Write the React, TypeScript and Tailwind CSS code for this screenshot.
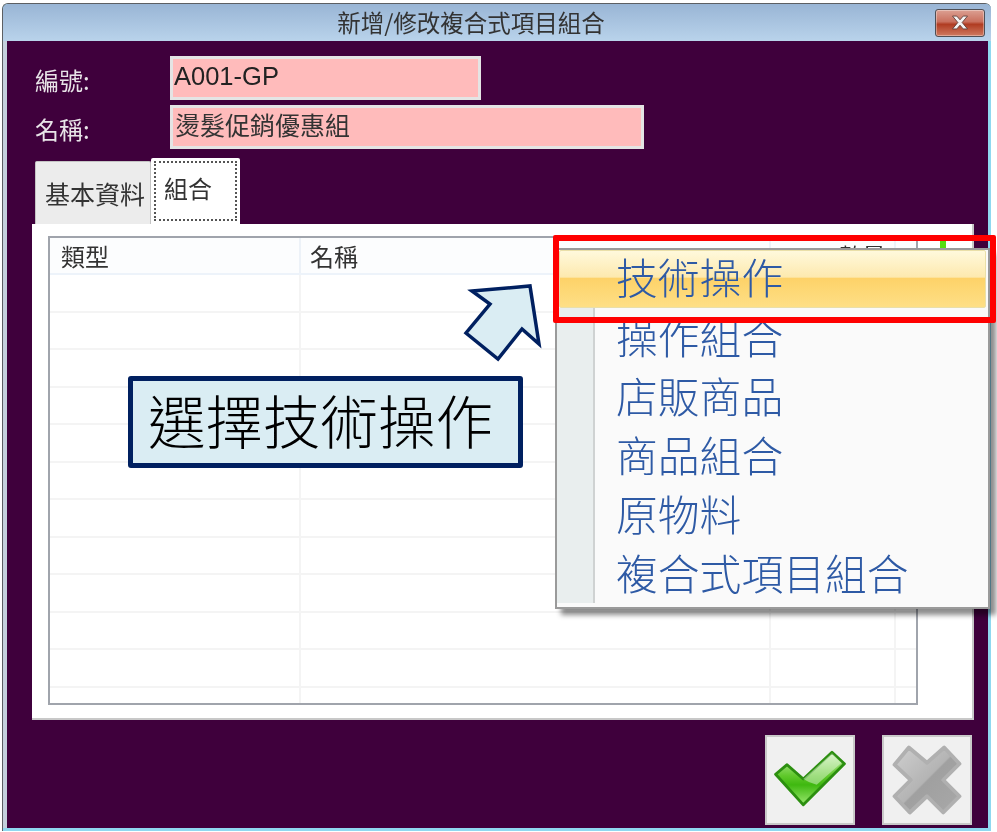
import React from "react";

const CJK = "font-['Noto_Sans_CJK_TC','Liberation_Sans',sans-serif]";
const MENU_ITEMS = ["操作組合", "店販商品", "商品組合", "原物料", "複合式項目組合"];

function CloseButton() {
  return (
    <div className="flex h-[28px] w-[50px] items-center justify-center rounded-[3px] border border-[#4f4f55] bg-[linear-gradient(#dca093,#c9705e_45%,#b03c22_55%,#cf7a60)] shadow-[inset_0_0_0_1px_rgba(255,255,255,0.35)]">
      <svg width="20" height="15" viewBox="0 0 18 14">
        <path d="M2 1h4l3 3.500L12 1h4l-5 6 5 6h-4l-3-3.500L6 13H2l5-6z" fill="#f4f4f4" stroke="#5b3a35" strokeWidth="0.8" />
      </svg>
    </div>
  );
}

function CheckIcon() {
  return (
    <svg width="88" height="88" viewBox="0 0 90 90">
      <defs>
        <linearGradient id="checkFill" x1="0" y1="0" x2="0" y2="1">
          <stop offset="0" stopColor="#c8f0b0" />
          <stop offset="0.45" stopColor="#5fc82a" />
          <stop offset="0.62" stopColor="#3fb810" />
          <stop offset="1" stopColor="#9be870" />
        </linearGradient>
      </defs>
      <path d="M9 39L21 29L38 44L68 16L81 28L38 71Z" fill="url(#checkFill)" stroke="#2c8f10" strokeWidth="3" strokeLinejoin="round" />
      <path d="M38 44L68 17L78 27L52 50Q44 48 38 44Z" fill="#ffffff" opacity="0.4" />
    </svg>
  );
}

function CrossIcon() {
  return (
    <svg width="88" height="88" viewBox="0 0 90 90">
      <defs>
        <linearGradient id="crossFill" x1="0" y1="0" x2="1" y2="1">
          <stop offset="0" stopColor="#cfcfcf" />
          <stop offset="0.49" stopColor="#b4b4b4" />
          <stop offset="0.51" stopColor="#a0a0a0" />
          <stop offset="1" stopColor="#a8a8a8" />
        </linearGradient>
      </defs>
      <path d="M11 29L26 11L45 27L63 11L79 28L62 45L79 62L62 79L45 62L27 79L11 62L28 45Z" fill="url(#crossFill)" stroke="#b0b0b0" strokeWidth="4" strokeLinejoin="round" />
    </svg>
  );
}

function Grid() {
  const rows = Array.from({ length: 12 });
  return (
    <div className="h-[469px] w-[870px] overflow-hidden border-2 border-[#a0a4ac] bg-white">
      <div className="flex h-[37px] border-b-2 border-[#edf3fa] bg-[#fcfdfe] text-[24px] leading-[36px] text-[#333]">
        <div className="w-[251px] border-r-2 border-[#edf2f8] pl-[11px]">類型</div>
        <div className="w-[470px] border-r-2 border-[#edf2f8] pl-[9px]">名稱</div>
        <div className="w-[125px] border-r-2 border-[#edf2f8] pr-[8px] text-right">數量</div>
      </div>
      {rows.map((_, i) => (
        <div key={i} className="flex h-[37.5px] border-b-2 border-[#f4f4f4]">
          <div className="w-[251px] border-r-2 border-[#f4f4f4]" />
          <div className="w-[470px] border-r-2 border-[#f4f4f4]" />
          <div className="w-[125px] border-r-2 border-[#f4f4f4]" />
        </div>
      ))}
    </div>
  );
}

function ContextMenu() {
  return (
    <div className="absolute left-[555px] top-[248px] w-[435px] border-2 border-[#9a9a9a] bg-[#fafafa] pb-[4px] text-[41.800px] font-light leading-[59px] text-[#2e5aa5] shadow-[6px_6px_5px_rgba(0,0,0,0.45)] blur-[0.4px]">
      <div className="mx-[2px] h-[58px] rounded-[2px] border border-[#eadfa8] bg-[linear-gradient(#fff9dc,#fde9ae_47%,#fdd268_48%,#fedf86)] pl-[56px] leading-[51px]">
        技術操作
      </div>
      {MENU_ITEMS.map((item) => (
        <div key={item} className="flex h-[59px] leading-[57px]">
          <div className="w-[38px] shrink-0 border-r-2 border-[#cfd2d2] bg-[#e9eeee]" />
          <div className="pl-[21px]">{item}</div>
        </div>
      ))}
    </div>
  );
}

export default function App() {
  return (
    <div className={`relative h-[832px] w-[997px] overflow-hidden bg-white pl-[2px] pt-[3px] ${CJK}`}>
      {/* Window */}
      <div className="flex h-[828px] w-[989px] flex-col overflow-hidden rounded-t-[6px] border-l border-t border-[#5c5f63] bg-[#8fd8f0] blur-[0.4px]">
        <div className="flex h-[37px] shrink-0 items-center bg-[linear-gradient(#99b5d5,#b9d3eb)] pl-[4px] pr-[6px]">
          <div className="flex-1 text-center text-[23.500px] text-[#333]">新增/修改複合式項目組合</div>
          <CloseButton />
        </div>
        <div className="mr-[3px] flex h-[787px] flex-col border-l-4 border-[#c4d0dc] bg-[#3f003c]">
          {/* Form */}
          <div className="ml-[28px] mt-[15px] flex h-[44px] items-center">
            <div className="w-[135px] pt-[3px] text-[24px] text-[#e8e4e8]">編號:</div>
            <div className="h-[44px] w-[311px] border-[3px] border-[#e4e4e4] bg-[#ffbbbb] pl-[1px] font-['Liberation_Sans',sans-serif] text-[25.500px] leading-[35px] text-[#222]">
              A001-GP
            </div>
          </div>
          <div className="ml-[28px] mt-[5px] flex h-[44px] items-center">
            <div className="w-[135px] pt-[4px] text-[24px] text-[#e8e4e8]">名稱:</div>
            <div className="h-[44px] w-[474px] border-[3px] border-[#e4e4e4] bg-[#ffbbbb] pl-[2px] text-[25px] leading-[32px] text-[#333]">
              燙髮促銷優惠組
            </div>
          </div>
          {/* Tabs */}
          <div className="ml-[28px] mt-[9px] flex h-[66px] items-end">
            <div className="h-[63px] w-[116px] rounded-t-[2px] border border-b-0 border-[#c4c4c4] bg-[#ececec] pl-[9px] text-[25px] leading-[62px] text-[#333]">
              基本資料
            </div>
            <div className="h-[66px] w-[89px] rounded-t-[2px] bg-white p-[3px]">
              <div className="h-[60px] border-2 border-dotted border-[#555] pl-[8px] text-[24px] leading-[50px] text-[#333]">組合</div>
            </div>
          </div>
          {/* Panel */}
          <div className="ml-[25px] flex h-[496px] w-[942px] gap-[22px] border-b-2 border-r-2 border-[#c8c8c8] bg-white pl-[16px] pt-[12px]">
            <Grid />
            <div className="mt-[4px] h-[12px] w-[6px] bg-[#55dd11]" />
          </div>
          {/* Actions */}
          <div className="ml-[758px] mt-[15px] flex gap-[27px]">
            <div className="flex h-[90px] w-[90px] items-center justify-center border-2 border-[#c9c9c9] bg-[#f0f0f0]">
              <CheckIcon />
            </div>
            <div className="flex h-[90px] w-[90px] items-center justify-center border-2 border-[#c9c9c9] bg-[#f0f0f0]">
              <CrossIcon />
            </div>
          </div>
        </div>
      </div>

      <ContextMenu />

      {/* Red highlight round the first menu item */}
      <div className="absolute left-[553px] top-[235px] h-[88px] w-[443px] rounded-[2px] border-[6px] border-[#ff0000]" />

      {/* Arrow */}
      <svg className="absolute left-[460px] top-[280px]" width="85" height="85" viewBox="460 280 85 85">
        <path d="M472 291L530 286L539 344L522 329L498 359L466 333L490 304Z" fill="#daedf3" stroke="#002060" strokeWidth="3.500" />
      </svg>

      {/* Callout */}
      <div className="absolute left-[128px] top-[376px] flex h-[92px] w-[395px] items-center rounded-[3px] border-[5px] border-[#002060] bg-[#daedf3] pb-[5px] pl-[15px] text-[57.500px] font-light text-black">
        選擇技術操作
      </div>
    </div>
  );
}
